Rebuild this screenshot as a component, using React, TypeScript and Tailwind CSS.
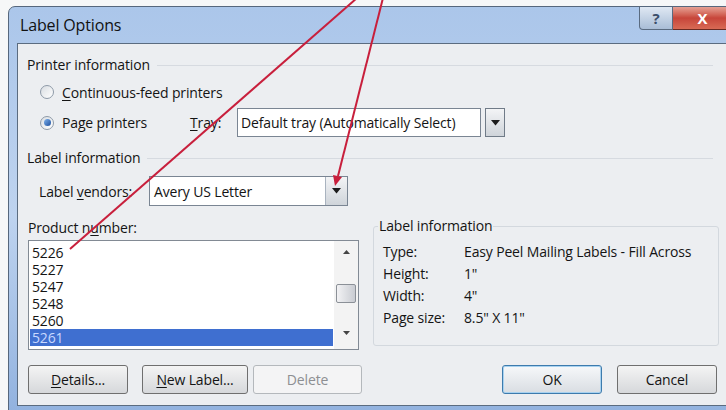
import type { ReactNode } from "react";

// Win7 style "Label Options" dialog

function Radio({ checked }: { checked?: boolean }) {
  return (
    <span className="w-[14px] h-[14px] rounded-full border border-[#8e9aa8] bg-gradient-to-br from-[#d9dde2] to-[#ffffff] flex items-center justify-center shrink-0">
      {checked && <span className="w-[7px] h-[7px] rounded-full bg-gradient-to-br from-[#7fb2ec] to-[#1d4f9e]" />}
    </span>
  );
}

function DropButton({ inset }: { inset?: boolean }) {
  return (
    <span
      className={
        inset
          ? "w-[22px] h-full border-l border-[#a9b3bf] bg-gradient-to-b from-[#f3f4f6] to-[#cfd4da] flex items-center justify-center"
          : "w-[20px] h-[29px] border border-[#707b88] bg-gradient-to-b from-[#f3f4f6] to-[#cfd4da] flex items-center justify-center"
      }
    >
      <svg width="9" height="6" viewBox="0 0 9 6">
        <path d="M0 0 H9 L4.5 5.5 Z" fill="#1c1c1c" />
      </svg>
    </span>
  );
}

function Heading({ children }: { children: ReactNode }) {
  return (
    <div className="h-[18px] flex items-center pr-[14px]">
      <span className="text-[14px] leading-[18px]">{children}</span>
      <span className="flex-1 ml-[7px] border-t border-[#d6dae0]" />
    </div>
  );
}

function Btn({ children, w, dis, def }: { children: ReactNode; w: string; dis?: boolean; def?: boolean }) {
  const base = "h-[29px] rounded-[3px] border flex items-center justify-center text-[14px] ";
  if (dis) return <div className={base + w + " border-[#b4b8bc] bg-[#f4f4f5] text-[#8d8f92]"}>{children}</div>;
  if (def)
    return (
      <div className={base + w + " border-[#3d7bad] bg-gradient-to-b from-[#f6f8fa] to-[#d9dde2] shadow-[inset_0_0_0_1px_#a8d2f0]"}>
        {children}
      </div>
    );
  return <div className={base + w + " border-[#6f6f6f] bg-gradient-to-b from-[#f4f4f4] to-[#d6d8db]"}>{children}</div>;
}

const products = ["5226", "5227", "5247", "5248", "5260", "5261"];

const info: [string, string][] = [
  ["Type:", "Easy Peel Mailing Labels - Fill Across"],
  ["Height:", "1\""],
  ["Width:", "4\""],
  ["Page size:", "8.5\" X 11\""],
];

export default function App() {
  return (
    <div className="relative w-[726px] h-[410px] overflow-hidden bg-[#f6f7f8] font-['Open_Sans',sans-serif] text-[#141414] tracking-[-0.15px]">
      <div className="ml-[8px] mt-[6px] w-[740px] h-[420px] rounded-tl-[7px] border border-[#56677d] bg-gradient-to-b from-[#abc6ea] via-[#bed3ef] to-[#8fb0de]">
        {/* title bar */}
        <div className="h-[36px] flex items-start justify-between">
          <span className="pl-[11px] pt-[7px] text-[16px] leading-[22px] text-[#111]">Label Options</span>
          <div className="flex mr-[14px]">
            <div className="w-[34px] h-[23px] rounded-bl-[4px] border border-t-0 border-[#5a6b80] bg-gradient-to-b from-[#dfe8f3] to-[#a9bdd6] flex items-center justify-center">
              <span className="text-[15px] font-bold text-[#3b4e6b] leading-none">?</span>
            </div>
            <div className="w-[60px] h-[23px] border border-l-0 border-t-0 border-[#6a2a22] bg-gradient-to-b from-[#e5a094] via-[#c7453a] to-[#d86a55] flex items-center justify-center">
              <span className="text-[15px] font-bold text-white leading-none">X</span>
            </div>
          </div>
        </div>

        {/* client area */}
        <div className="ml-[8px] w-[710px] h-[363px] border-t border-b border-l border-[#5b6c80] bg-[#eceef1] pl-[9px] pt-[12px]">
          <Heading>Printer information</Heading>

          <div className="mt-[9px] h-[18px] flex items-center">
            <span className="ml-[13px]">
              <Radio />
            </span>
            <span className="ml-[8px] text-[14px]">
              <span className="underline underline-offset-2">C</span>ontinuous-feed printers
            </span>
          </div>

          <div className="mt-[7px] h-[29px] flex items-center">
            <span className="ml-[13px]">
              <Radio checked />
            </span>
            <span className="ml-[8px] w-[128px] text-[14px]">
              Pa<span className="underline underline-offset-2">g</span>e printers
            </span>
            <span className="w-[47px] text-[14px]">
              <span className="underline underline-offset-2">T</span>ray:
            </span>
            <div className="w-[244px] h-[29px] border border-[#7a8593] bg-white flex items-center pl-[3px] text-[14px]">
              Default tray (Automatically Select)
            </div>
            <span className="ml-[4px]">
              <DropButton />
            </span>
          </div>

          <div className="mt-[12px]">
            <Heading>Label information</Heading>
          </div>

          <div className="mt-[9px] h-[30px] flex items-center">
            <span className="ml-[12px] w-[110px] text-[14px]">
              Label <span className="underline underline-offset-2">v</span>endors:
            </span>
            <div className="w-[199px] h-[30px] border border-[#7a8593] bg-white flex items-center justify-between">
              <span className="pl-[4px] text-[14px]">Avery US Letter</span>
              <DropButton inset />
            </div>
          </div>

          <div className="mt-[11px] flex items-start">
            {/* product list */}
            <div className="w-[331px] ml-[1px]">
              <div className="pt-[2px] h-[20px] text-[14px] leading-[18px]">
                Product n<span className="underline underline-offset-2">u</span>mber:
              </div>
              <div className="mt-[3px] h-[110px] border border-[#828a94] bg-white flex">
                <div className="flex-1 pt-[3px] px-[1px]">
                  {products.map((p) => (
                    <div
                      key={p}
                      className={
                        p === "5261"
                          ? "h-[17px] leading-[17px] pl-[2px] text-[14px] bg-[#3f6fd0] text-[#c8d8ff]"
                          : "h-[17px] leading-[17px] pl-[2px] text-[14px]"
                      }
                    >
                      {p}
                    </div>
                  ))}
                </div>
                <div className="w-[24px] flex flex-col items-center bg-[#f3f3f3]">
                  <svg className="mt-[9px]" width="7" height="4" viewBox="0 0 7 4">
                    <path d="M0 4 L3.5 0 L7 4 Z" fill="#444" />
                  </svg>
                  <div className="mt-[30px] w-[20px] h-[19px] rounded-[2px] border border-[#8b9097] bg-gradient-to-r from-[#f2f2f4] to-[#c9ccd2]" />
                  <svg className="mt-[28px]" width="7" height="4" viewBox="0 0 7 4">
                    <path d="M0 0 H7 L3.5 4 Z" fill="#444" />
                  </svg>
                </div>
              </div>
            </div>

            {/* label details */}
            <fieldset className="ml-[14px] w-[346px] h-[129px] border border-[#d3d8de] rounded-[3px] pl-[9px] pt-[5px]">
              <legend className="ml-[-5px] px-[1px] text-[14px] leading-[18px]">Label information</legend>
              {info.map(([k, v]) => (
                <div key={k} className="h-[22px] flex items-center text-[14px]">
                  <span className="w-[81px]">{k}</span>
                  <span>{v}</span>
                </div>
              ))}
            </fieldset>
          </div>

          <div className="mt-[15px] flex items-center">
            <span className="ml-[1px]">
              <Btn w="w-[100px]">
                <span className="underline underline-offset-2">D</span>etails...
              </Btn>
            </span>
            <span className="ml-[14px]">
              <Btn w="w-[106px]">
                <span className="underline underline-offset-2">N</span>ew Label...
              </Btn>
            </span>
            <span className="ml-[5px]">
              <Btn w="w-[109px]" dis>
                Delete
              </Btn>
            </span>
            <span className="ml-[140px]">
              <Btn w="w-[100px]" def>
                OK
              </Btn>
            </span>
            <span className="ml-[15px]">
              <Btn w="w-[100px]">Cancel</Btn>
            </span>
          </div>
        </div>
      </div>

      {/* callout lines */}
      <svg className="absolute inset-0 pointer-events-none" width="726" height="410" viewBox="0 0 726 410">
        <line x1="357" y1="-2" x2="70" y2="249" stroke="#c81f3c" strokeWidth="2" />
        <line x1="383" y1="-2" x2="338" y2="176" stroke="#c81f3c" strokeWidth="2" />
        <path d="M333 175 L342 177 L335 186 Z" fill="#c81f3c" />
      </svg>
    </div>
  );
}
